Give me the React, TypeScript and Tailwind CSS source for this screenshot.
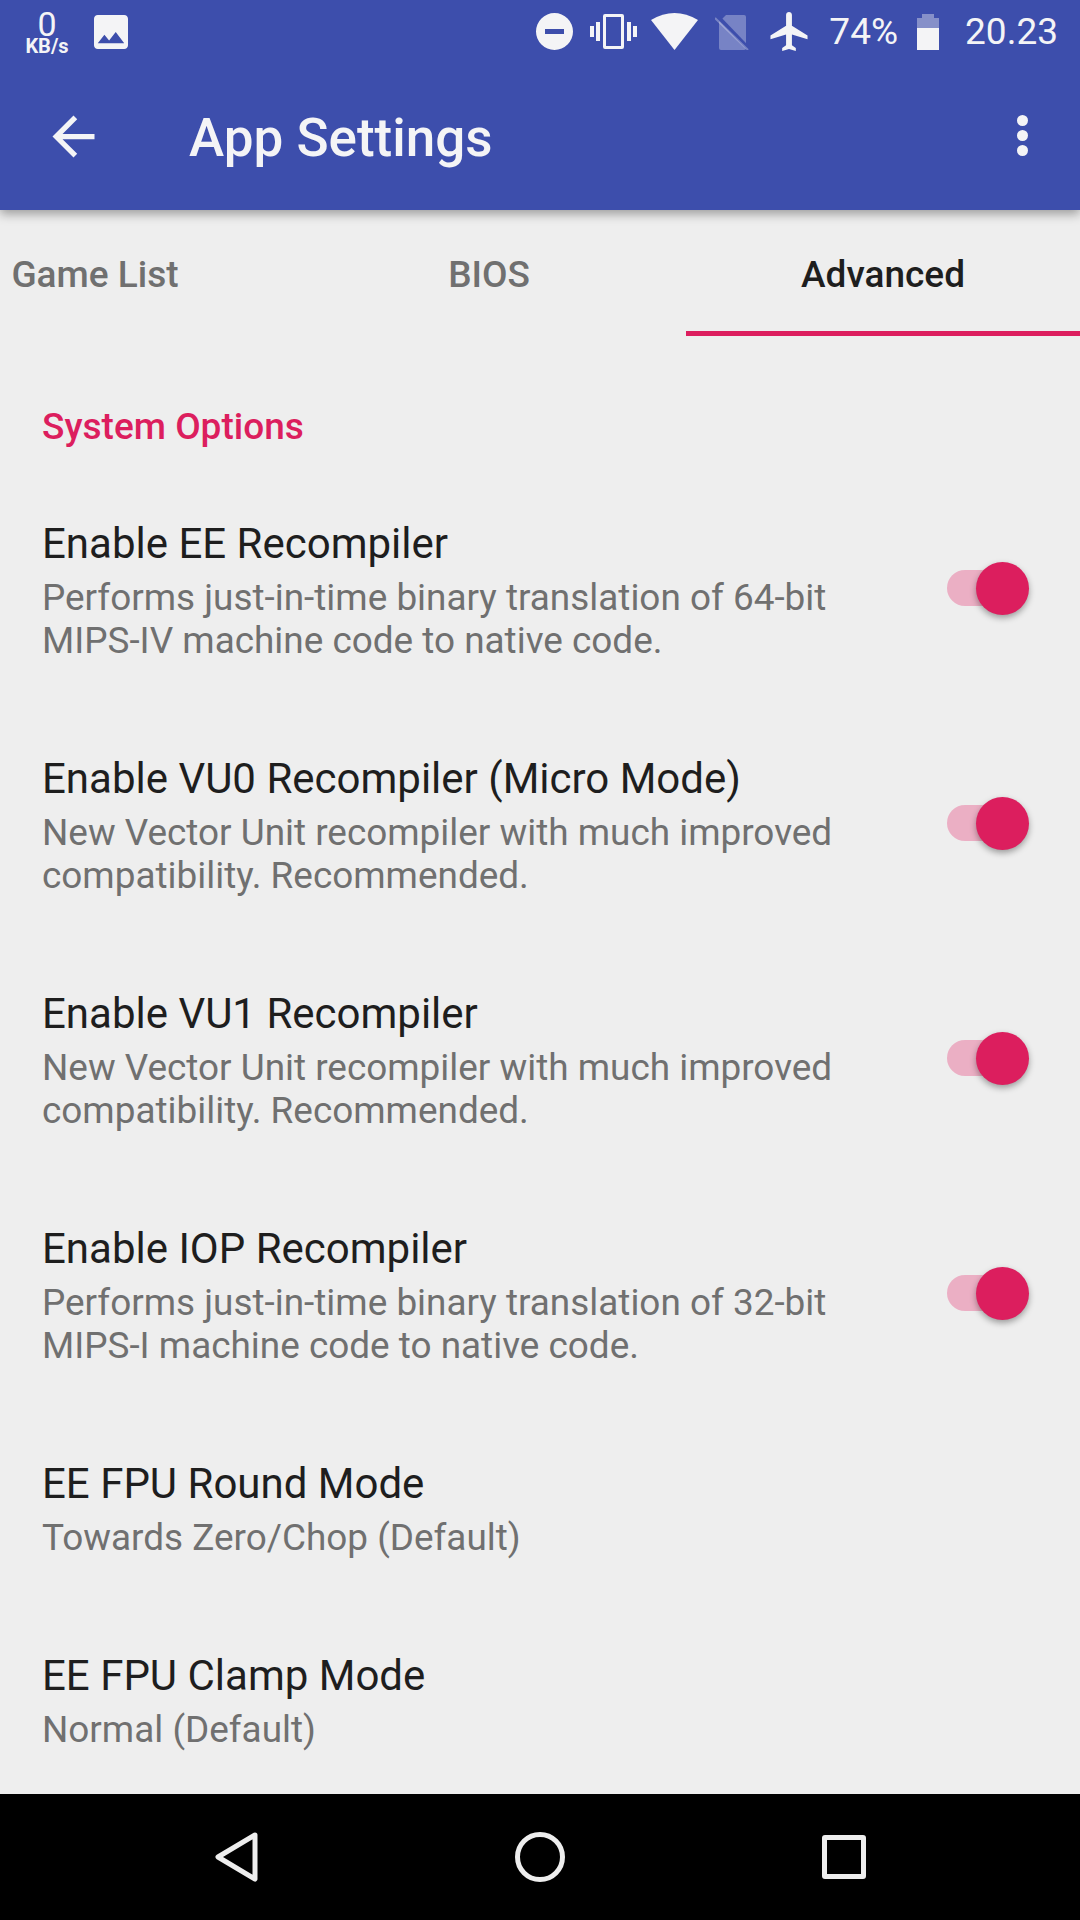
const settings = [
  { title: "Enable EE Recompiler", lines: ["Performs just-in-time binary translation of 64-bit", "MIPS-IV machine code to native code."], toggle: true },
  { title: "Enable VU0 Recompiler (Micro Mode)", lines: ["New Vector Unit recompiler with much improved", "compatibility. Recommended."], toggle: true },
  { title: "Enable VU1 Recompiler", lines: ["New Vector Unit recompiler with much improved", "compatibility. Recommended."], toggle: true },
  { title: "Enable IOP Recompiler", lines: ["Performs just-in-time binary translation of 32-bit", "MIPS-I machine code to native code."], toggle: true },
  { title: "EE FPU Round Mode", lines: ["Towards Zero/Chop (Default)"], toggle: false },
  { title: "EE FPU Clamp Mode", lines: ["Normal (Default)"], toggle: false },
];

function Toggle() {
  return (
    <div className="relative w-[82px] h-[53px] flex items-center">
      <div className="w-[72px] h-[36px] rounded-full bg-[#ebafc4]" />
      <div className="absolute right-0 top-0 w-[53px] h-[53px] rounded-full bg-[#dc1e5e] shadow-[0_3px_6px_rgba(0,0,0,0.35)]" />
    </div>
  );
}

function StatusBar() {
  return (
    <div className="h-[63px] flex items-center text-[#f4f4f6]">
      <div className="w-[46px] ml-[24px] flex flex-col items-center">
        <span className="text-[34px] leading-[29px] h-[29px]">0</span>
        <span className="text-[20px] leading-[15px] font-bold">KB/s</span>
      </div>
      <svg className="w-[34px] h-[34px] ml-[24px]" viewBox="3 3 18 18" fill="currentColor">
        <path d="M21 19V5c0-1.1-.9-2-2-2H5c-1.1 0-2 .9-2 2v14c0 1.1.9 2 2 2h14c1.1 0 2-.9 2-2zM8.5 13.5l2.5 3.01L14.5 12l4.5 6H5l3.5-4.5z" />
      </svg>
      <svg className="w-[37px] h-[37px] ml-auto" viewBox="0 0 37 37" fill="currentColor">
        <path fillRule="evenodd" d="M18.5 0a18.5 18.5 0 1 0 0 37a18.5 18.5 0 1 0 0-37zM9 16h19v5H9z" />
      </svg>
      <svg className="w-[47px] h-[35px] ml-[17px]" viewBox="0 0 47 35" fill="currentColor">
        <path d="M0 12h4v11H0zM6 8h4v19H6zM37 8h4v19h-4zM43 12h4v11h-4z" />
        <path fillRule="evenodd" d="M15 0h17a2 2 0 0 1 2 2v31a2 2 0 0 1-2 2H15a2 2 0 0 1-2-2V2a2 2 0 0 1 2-2zM16 3v29h15V3z" />
      </svg>
      <svg className="w-[47px] h-[37px] ml-[14px]" viewBox="0 0 47 37" fill="currentColor">
        <path d="M0 7Q23.500 -7 47 7L23.500 37z" />
      </svg>
      <svg className="w-[34px] h-[36px] ml-[17px]" viewBox="0 0 34 36">
        <path d="M11 1h18a2 2 0 0 1 2 2v31a2 2 0 0 1-2 2H6a2 2 0 0 1-2-2V8z" fill="#ffffff" fillOpacity="0.3" />
        <path d="M3 3L33 34" stroke="#3d4eac" strokeWidth="4" />
        <path d="M0 4L33 36" stroke="#ffffff" strokeOpacity="0.3" strokeWidth="2" />
      </svg>
      <svg className="w-[38px] h-[39px] ml-[21px]" viewBox="2 2 19 20" fill="currentColor">
        <path d="M21 16v-2l-8-5V3.500c0-.83-.67-1.500-1.500-1.500S10 2.670 10 3.500V9l-8 5v2l8-2.500V19l-2 1.500V22l3.500-1 3.500 1v-1.500L13 19v-5.500l8 2.500z" />
      </svg>
      <span className="text-[37px] leading-[40px] ml-[21px]">74%</span>
      <svg className="w-[22px] h-[36px] ml-[19px]" viewBox="0 0 22 36" fill="currentColor">
        <path d="M5 0h12v4h5v10H0V4h5z" fillOpacity="0.4" />
        <path d="M0 14h22v22H0z" />
      </svg>
      <span className="text-[37px] leading-[40px] ml-[26px] mr-[22px]">20.23</span>
    </div>
  );
}

export default function App() {
  return (
    <div className="w-[1080px] h-[1920px] flex flex-col overflow-hidden bg-[#eeeeee] font-['Roboto',sans-serif]">
      <header className="relative z-10 h-[210px] shrink-0 bg-[#3d4eac] shadow-[0_4px_10px_rgba(0,0,0,0.35)] text-[#f4f4f6]">
        <StatusBar />
        <div className="h-[147px] flex items-center">
          <svg className="w-[63px] h-[63px] ml-[42px]" viewBox="0 0 24 24" fill="currentColor">
            <path d="M20 11H7.830l5.590-5.590L12 4l-8 8 8 8 1.410-1.410L7.830 13H20v-2z" />
          </svg>
          <h1 className="ml-[84px] mt-[2px] text-[53px] leading-[60px] font-medium">App Settings</h1>
          <div className="ml-auto mr-[52px] mb-[2px] flex flex-col gap-[4px]">
            <span className="w-[11px] h-[11px] rounded-full bg-[#f4f4f6]" />
            <span className="w-[11px] h-[11px] rounded-full bg-[#f4f4f6]" />
            <span className="w-[11px] h-[11px] rounded-full bg-[#f4f4f6]" />
          </div>
        </div>
      </header>

      <nav className="h-[126px] shrink-0 flex -ml-[102px] text-[37px] font-medium text-center">
        <div className="w-[394px] shrink-0 pt-[8px] border-b-[5px] border-transparent flex items-center justify-center text-[#707070]">Game List</div>
        <div className="w-[394px] shrink-0 pt-[8px] border-b-[5px] border-transparent flex items-center justify-center text-[#707070]">BIOS</div>
        <div className="w-[394px] shrink-0 pt-[8px] border-b-[5px] border-[#dc1e5e] flex items-center justify-center text-[#1e1e1e]">Advanced</div>
      </nav>

      <main className="flex-1 min-h-0 overflow-hidden pl-[42px] pr-[51px] pt-[66px]">
        <h2 className="text-[37px] leading-[50px] font-medium text-[#dc1e5e] mb-[65px]">System Options</h2>
        <div className="flex flex-col gap-[89px]">
          {settings.map((s) => (
            <div key={s.title} className="flex items-center justify-between">
              <div className="pb-[1px]">
                <div className="text-[42px] leading-[54px] text-[#1e1e1e] mb-[5px]">{s.title}</div>
                {s.lines.map((l) => (
                  <div key={l} className="text-[36.9px] leading-[43px] text-[#707070]">{l}</div>
                ))}
              </div>
              {s.toggle && <div className="-translate-y-[2px]"><Toggle /></div>}
            </div>
          ))}
        </div>
      </main>

      <footer className="h-[126px] shrink-0 bg-black flex items-center">
        <svg className="w-[43px] h-[50px] ml-[215px]" viewBox="0 0 43 50" fill="none" stroke="#eeeeee" strokeWidth="5" strokeLinejoin="round">
          <path d="M40 3L3 25L40 47z" />
        </svg>
        <svg className="w-[50px] h-[50px] ml-[257px]" viewBox="0 0 50 50" fill="none" stroke="#eeeeee" strokeWidth="5">
          <circle cx="25" cy="25" r="22.500" />
        </svg>
        <div className="w-[44px] h-[44px] ml-[257px] border-[5px] border-[#eeeeee] rounded-[3px]" />
      </footer>
    </div>
  );
}
